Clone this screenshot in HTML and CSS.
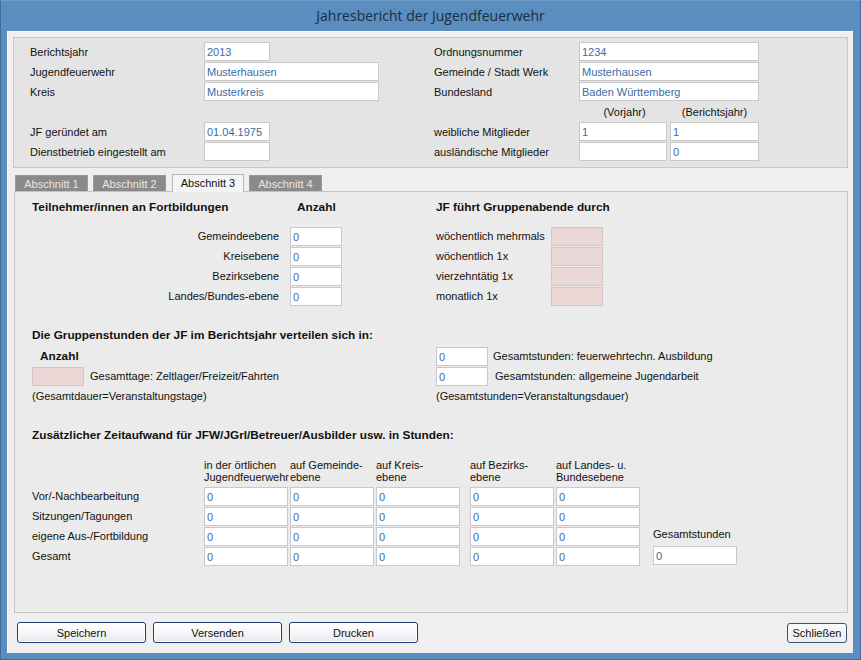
FILE: index.html
```html
<!DOCTYPE html>
<html lang="de">
<head>
<meta charset="utf-8">
<title>Jahresbericht der Jugendfeuerwehr</title>
<link rel="stylesheet" href="styles.css">
</head>
<body>
<div class="window">
  <div class="titlebar">Jahresbericht der Jugendfeuerwehr</div>
  <div class="client">
    <div class="head-panel">
      <span class="lbl">Berichtsjahr</span>
      <input class="fld w-short" type="text" value="2013">
      <span class="lbl">Ordnungsnummer</span>
      <input class="fld span2" type="text" value="1234">

      <span class="lbl">Jugendfeuerwehr</span>
      <input class="fld w-long" type="text" value="Musterhausen">
      <span class="lbl">Gemeinde / Stadt Werk</span>
      <input class="fld span2" type="text" value="Musterhausen">

      <span class="lbl">Kreis</span>
      <input class="fld w-long" type="text" value="Musterkreis">
      <span class="lbl">Bundesland</span>
      <input class="fld span2" type="text" value="Baden Württemberg">

      <span></span><span></span><span></span>
      <span class="lbl center">(Vorjahr)</span>
      <span class="lbl center">(Berichtsjahr)</span>

      <span class="lbl">JF geründet am</span>
      <input class="fld w-short" type="text" value="01.04.1975">
      <span class="lbl">weibliche Mitglieder</span>
      <input class="fld w-half" type="text" value="1">
      <input class="fld w-half2" type="text" value="1">

      <span class="lbl">Dienstbetrieb eingestellt am</span>
      <input class="fld w-short" type="text" value="">
      <span class="lbl">ausländische Mitglieder</span>
      <input class="fld w-half" type="text" value="">
      <input class="fld w-half2" type="text" value="0">
    </div>

    <div class="tabs">
      <div class="tabbar">
        <div class="tab">Abschnitt 1</div>
        <div class="tab">Abschnitt 2</div>
        <div class="tab active">Abschnitt 3</div>
        <div class="tab">Abschnitt 4</div>
      </div>
      <div class="tabpanel">
        <div class="sec1">
          <span class="h">Teilnehmer/innen an Fortbildungen</span>
          <span class="h anz">Anzahl</span>
          <span class="h span2">JF führt Gruppenabende durch</span>

          <span class="lbl right">Gemeindeebene</span>
          <input class="fld w-num" type="text" value="0">
          <span class="lbl">wöchentlich mehrmals</span>
          <input class="fld pink w-num" type="text" value="">

          <span class="lbl right">Kreisebene</span>
          <input class="fld w-num" type="text" value="0">
          <span class="lbl">wöchentlich 1x</span>
          <input class="fld pink w-num" type="text" value="">

          <span class="lbl right">Bezirksebene</span>
          <input class="fld w-num" type="text" value="0">
          <span class="lbl">vierzehntätig 1x</span>
          <input class="fld pink w-num" type="text" value="">

          <span class="lbl right">Landes/Bundes-ebene</span>
          <input class="fld w-num" type="text" value="0">
          <span class="lbl">monatlich 1x</span>
          <input class="fld pink w-num" type="text" value="">
        </div>

        <div class="h sec-head">Die Gruppenstunden der JF im Berichtsjahr verteilen sich in:</div>
        <div class="sec2">
          <span class="h anz2">Anzahl</span>
          <div class="pair">
            <input class="fld w-num" type="text" value="0">
            <span class="lbl">Gesamtstunden: feuerwehrtechn. Ausbildung</span>
          </div>
          <div class="pair gap6">
            <input class="fld pink w-num" type="text" value="">
            <span class="lbl">Gesamttage: Zeltlager/Freizeit/Fahrten</span>
          </div>
          <div class="pair gap7">
            <input class="fld w-num" type="text" value="0">
            <span class="lbl">Gesamtstunden: allgemeine Jugendarbeit</span>
          </div>
          <span class="lbl">(Gesamtdauer=Veranstaltungstage)</span>
          <span class="lbl">(Gesamtstunden=Veranstaltungsdauer)</span>
        </div>

        <div class="h sec-head">Zusätzlicher Zeitaufwand für JFW/JGrl/Betreuer/Ausbilder usw. in Stunden:</div>
        <div class="sec3">
          <span></span>
          <span class="colhead">in der örtlichen<br>Jugendfeuerwehr</span>
          <span class="colhead">auf Gemeinde-<br>ebene</span>
          <span class="colhead">auf Kreis-<br>ebene</span>
          <span class="colhead">auf Bezirks-<br>ebene</span>
          <span class="colhead">auf Landes- u.<br>Bundesebene</span>
          <span></span>

          <span class="lbl">Vor/-Nachbearbeitung</span>
          <input class="fld w-col" type="text" value="0">
          <input class="fld w-col" type="text" value="0">
          <input class="fld w-col" type="text" value="0">
          <input class="fld w-col" type="text" value="0">
          <input class="fld w-col" type="text" value="0">
          <span></span>

          <span class="lbl">Sitzungen/Tagungen</span>
          <input class="fld w-col" type="text" value="0">
          <input class="fld w-col" type="text" value="0">
          <input class="fld w-col" type="text" value="0">
          <input class="fld w-col" type="text" value="0">
          <input class="fld w-col" type="text" value="0">
          <span></span>

          <span class="lbl">eigene Aus-/Fortbildung</span>
          <input class="fld w-col" type="text" value="0">
          <input class="fld w-col" type="text" value="0">
          <input class="fld w-col" type="text" value="0">
          <input class="fld w-col" type="text" value="0">
          <input class="fld w-col" type="text" value="0">
          <span class="lbl total-lbl">Gesamtstunden</span>

          <span class="lbl">Gesamt</span>
          <input class="fld w-col" type="text" value="0">
          <input class="fld w-col" type="text" value="0">
          <input class="fld w-col" type="text" value="0">
          <input class="fld w-col" type="text" value="0">
          <input class="fld w-col" type="text" value="0">
          <input class="fld w-col total" type="text" value="0">
        </div>
      </div>
    </div>

    <div class="buttons">
      <button class="btn main">Speichern</button>
      <button class="btn main">Versenden</button>
      <button class="btn main">Drucken</button>
      <button class="btn close">Schließen</button>
    </div>
  </div>
</div>
</body>
</html>
```

FILE: styles.css
```css
* { box-sizing: border-box; }

html, body {
  margin: 0;
  padding: 0;
}

body {
  width: 861px;
  height: 660px;
  background: #5b8dbf;
  font-family: "Liberation Sans", Arial, sans-serif;
  font-size: 11px;
  color: #111;
  overflow: hidden;
}

.window {
  width: 861px;
  height: 660px;
  display: flex;
  flex-direction: column;
  border: 1px solid #3e6c9c;
  border-top-color: #6f9dcb;
}

.titlebar {
  height: 30px;
  display: flex;
  align-items: center;
  justify-content: center;
  font-family: "Open Sans", "Liberation Sans", sans-serif;
  font-size: 14px;
  color: #1d2b3c;
  padding-bottom: 1px;
}

.client {
  margin: 0 7px 6px 6px;
  flex: 1;
  background: #efefef;
  border-left: 1px solid #fafafa;
  border-top: 1px solid #fafafa;
  padding: 5px 5px 0 5px;
  display: flex;
  flex-direction: column;
}

/* inputs */
.fld {
  height: 19px;
  border: 1px solid #c9c9c9;
  background: #fff;
  color: #3a6ca6;
  font-family: "Liberation Sans", Arial, sans-serif;
  font-size: 11px;
  padding: 0 0 0 2px;
  margin: 0;
  outline: none;
}
.fld.pink {
  background: #ebd6d6;
  border-color: #d6c4c4;
}
.w-short { width: 66px; }
.w-long { width: 175px; }
.w-half { width: 88px; }
.w-half2 { width: 89px; }
.w-num { width: 52px; }
.w-col { width: 84px; }
.span2 { grid-column: span 2; width: 180px; }

.lbl {
  line-height: 19px;
  white-space: nowrap;
}
.lbl.center { text-align: center; }
.lbl.right { text-align: right; padding-right: 11px; }

.h {
  font-weight: bold;
  font-size: 11.8px;
  line-height: 14px;
  white-space: nowrap;
}

/* header panel */
.head-panel {
  height: 131px;
  background: #e4e4e4;
  border: 1px solid #c8c8c8;
  padding: 4px 0 0 16px;
  display: grid;
  grid-template-columns: 174px 230px 145px 91px 89px;
  grid-template-rows: repeat(6, 20px);
  align-items: start;
}
.head-panel .lbl { line-height: 20px; }

/* tabs */
.tabs {
  margin: 6px 0 0 1px;
  display: flex;
  flex-direction: column;
}
.tabbar {
  display: flex;
  gap: 5px;
  padding-left: 1px;
  height: 17px;
  align-items: flex-end;
}
.tab {
  width: 73px;
  height: 16px;
  background: #8a8a8a;
  color: #e6e6e6;
  text-align: center;
  line-height: 16px;
  border: 1px solid #9a9a9a;
  border-bottom: none;
}
.tab.active {
  height: 18px;
  margin-bottom: -1px;
  background: #f4f4f4;
  color: #111;
  border-color: #b8b8b8;
  position: relative;
  z-index: 1;
  width: 72px;
  margin-left: 1px;
}

.tabpanel {
  height: 422px;
  width: 834px;
  background: #ebebeb;
  border: 1px solid #c4c4c4;
  padding: 8px 0 0 17px;
}

.sec1 {
  display: grid;
  grid-template-columns: 258px 146px 115px 52px;
  grid-template-rows: 27px repeat(4, 20px);
  align-items: start;
}
.sec1 .anz { padding-left: 7px; }

.sec-head { margin-top: 21px; }

.sec2 {
  margin-top: 5px;
  display: grid;
  grid-template-columns: 404px 400px;
  grid-template-rows: repeat(3, 20px);
  align-items: start;
}
.sec2 .anz2 { padding-left: 8px; line-height: 19px; }
.pair {
  display: flex;
  align-items: flex-start;
  gap: 5px;
}
.pair.gap6 { gap: 6px; }
.pair.gap7 { gap: 7px; }

.sec3 {
  margin-top: 17px;
  display: grid;
  grid-template-columns: 172px 86px 86px 94px 86px 97px 84px;
  grid-template-rows: 28px repeat(4, 20px);
  align-items: start;
}
.colhead {
  line-height: 12px;
  white-space: nowrap;
}
.total-lbl { line-height: 14px; }
.total { margin-top: -1px; }

/* buttons */
.buttons {
  margin-top: 9px;
  display: flex;
  gap: 7px;
  padding-left: 4px;
  padding-right: 1px;
  align-items: flex-start;
}
.btn {
  font-family: "Liberation Sans", Arial, sans-serif;
  font-size: 11px;
  color: #111;
  margin: 0;
  padding: 0;
  cursor: default;
}
.btn.main {
  width: 129px;
  height: 21px;
  border: 1px solid #1f3d6e;
  border-radius: 3px;
  background: linear-gradient(#ffffff, #f4f6f9 50%, #e6eaf0);
  box-shadow: inset 0 0 0 1px #ffffff;
}
.btn.close {
  margin-left: auto;
  margin-top: 1px;
  width: 60px;
  height: 20px;
  border: 1px solid #3e536b;
  border-radius: 3px;
  background: linear-gradient(#fbfbfb, #eeeeee);
}
```
